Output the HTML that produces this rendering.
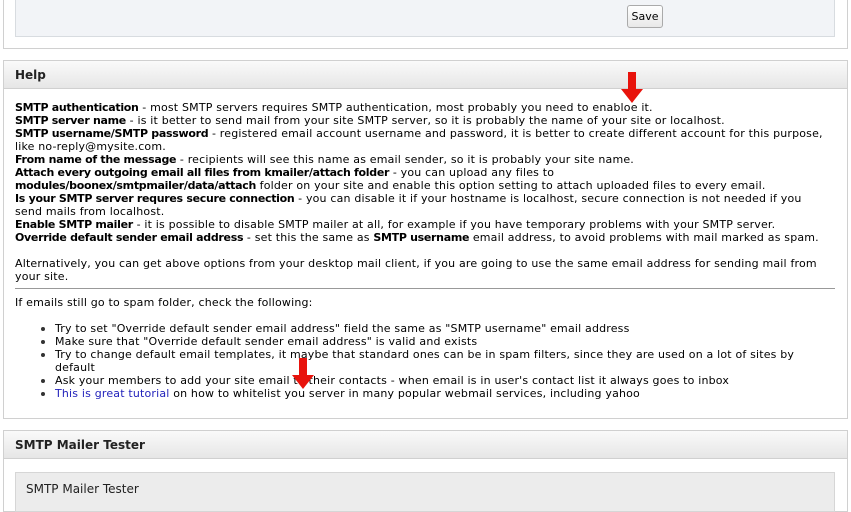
<!DOCTYPE html>
<html><head><style>
body{margin:0;width:851px;height:505px;overflow:hidden;background:#fff;font-family:"DejaVu Sans","Liberation Sans",sans-serif;font-size:11px;color:#000;position:relative}
.box{position:absolute;left:3px;width:843px;border:1px solid #d0d0d0;background:#fff}
.hdr{height:27px;line-height:28px;padding-left:11px;font-weight:bold;font-size:12px;color:#222;background:linear-gradient(#fafafa,#e6e6e6);border-bottom:1px solid #d0d0d0}
.txt{position:absolute;left:15px;top:101px;line-height:13px;white-space:nowrap;letter-spacing:0.18px}
.txt b{letter-spacing:-0.3px}
ul{margin:0;padding:0 0 0 40px;list-style:none}
li{position:relative}
li:before{content:"";position:absolute;left:-14px;top:5px;width:4px;height:4px;border-radius:50%;background:#333}
a{color:#2222bb;text-decoration:none}
.arrow{position:absolute}
</style></head><body>
<div class="box" style="top:-2px;height:49px">
 <div style="position:absolute;left:11px;top:0;width:818px;height:37px;background:#f2f4f7;border:1px solid #d8dce0;border-top:none"></div>
 <div style="position:absolute;left:623px;top:6px;width:34px;height:21px;border:1px solid #aaa;border-radius:3px;background:linear-gradient(#fff,#e8e8e8);font-size:11px;line-height:21px;text-align:center">Save</div>
</div>
<div class="box" style="top:60px;height:357px"><div class="hdr">Help</div></div>
<div class="txt">
<b>SMTP authentication</b> - most SMTP servers requires SMTP authentication, most probably you need to enabloe it.<br>
<b>SMTP server name</b> - is it better to send mail from your site SMTP server, so it is probably the name of your site or localhost.<br>
<b>SMTP username/SMTP password</b> - registered email account username and password, it is better to create different account for this purpose,<br>
like no-reply@mysite.com.<br>
<b>From name of the message</b> - recipients will see this name as email sender, so it is probably your site name.<br>
<b>Attach every outgoing email all files from kmailer/attach folder</b> - you can upload any files to<br>
<b>modules/boonex/smtpmailer/data/attach</b> folder on your site and enable this option setting to attach uploaded files to every email.<br>
<b>Is your SMTP server requres secure connection</b> - you can disable it if your hostname is localhost, secure connection is not needed if you<br>
send mails from localhost.<br>
<b>Enable SMTP mailer</b> - it is possible to disable SMTP mailer at all, for example if you have temporary problems with your SMTP server.<br>
<b>Override default sender email address</b> - set this the same as <b>SMTP username</b> email address, to avoid problems with mail marked as spam.<br>
<br>
Alternatively, you can get above options from your desktop mail client, if you are going to use the same email address for sending mail from<br>
your site.
<div style="height:1px;background:#999;width:820px;margin:5px 0 7px"></div>
If emails still go to spam folder, check the following:<br><br>
<ul>
<li>Try to set "Override default sender email address" field the same as "SMTP username" email address</li>
<li>Make sure that "Override default sender email address" is valid and exists</li>
<li>Try to change default email templates, it maybe that standard ones can be in spam filters, since they are used on a lot of sites by<br>default</li>
<li>Ask your members to add your site email to their contacts - when email is in user's contact list it always goes to inbox</li>
<li><a>This is great tutorial</a> on how to whitelist you server in many popular webmail services, including yahoo</li>
</ul>
</div>
<div class="box" style="top:430px;height:80px"><div class="hdr">SMTP Mailer Tester</div>
 <div style="position:absolute;left:11px;top:41px;width:820px;height:40px;background:#ececec;border:1px solid #d6d6d6;font-size:12px;line-height:32px;padding-left:10px;box-sizing:border-box;color:#222">SMTP Mailer Tester</div>
</div>
<svg class="arrow" style="left:621px;top:72px" width="22" height="32"><polygon points="7,0 15,0 15,17 22,17 11,31 0,17 7,17" fill="#e8130c"/></svg>
<svg class="arrow" style="left:292px;top:358px" width="22" height="32"><polygon points="7,0 15,0 15,17 22,17 11,31 0,17 7,17" fill="#e8130c"/></svg>
</body></html>
